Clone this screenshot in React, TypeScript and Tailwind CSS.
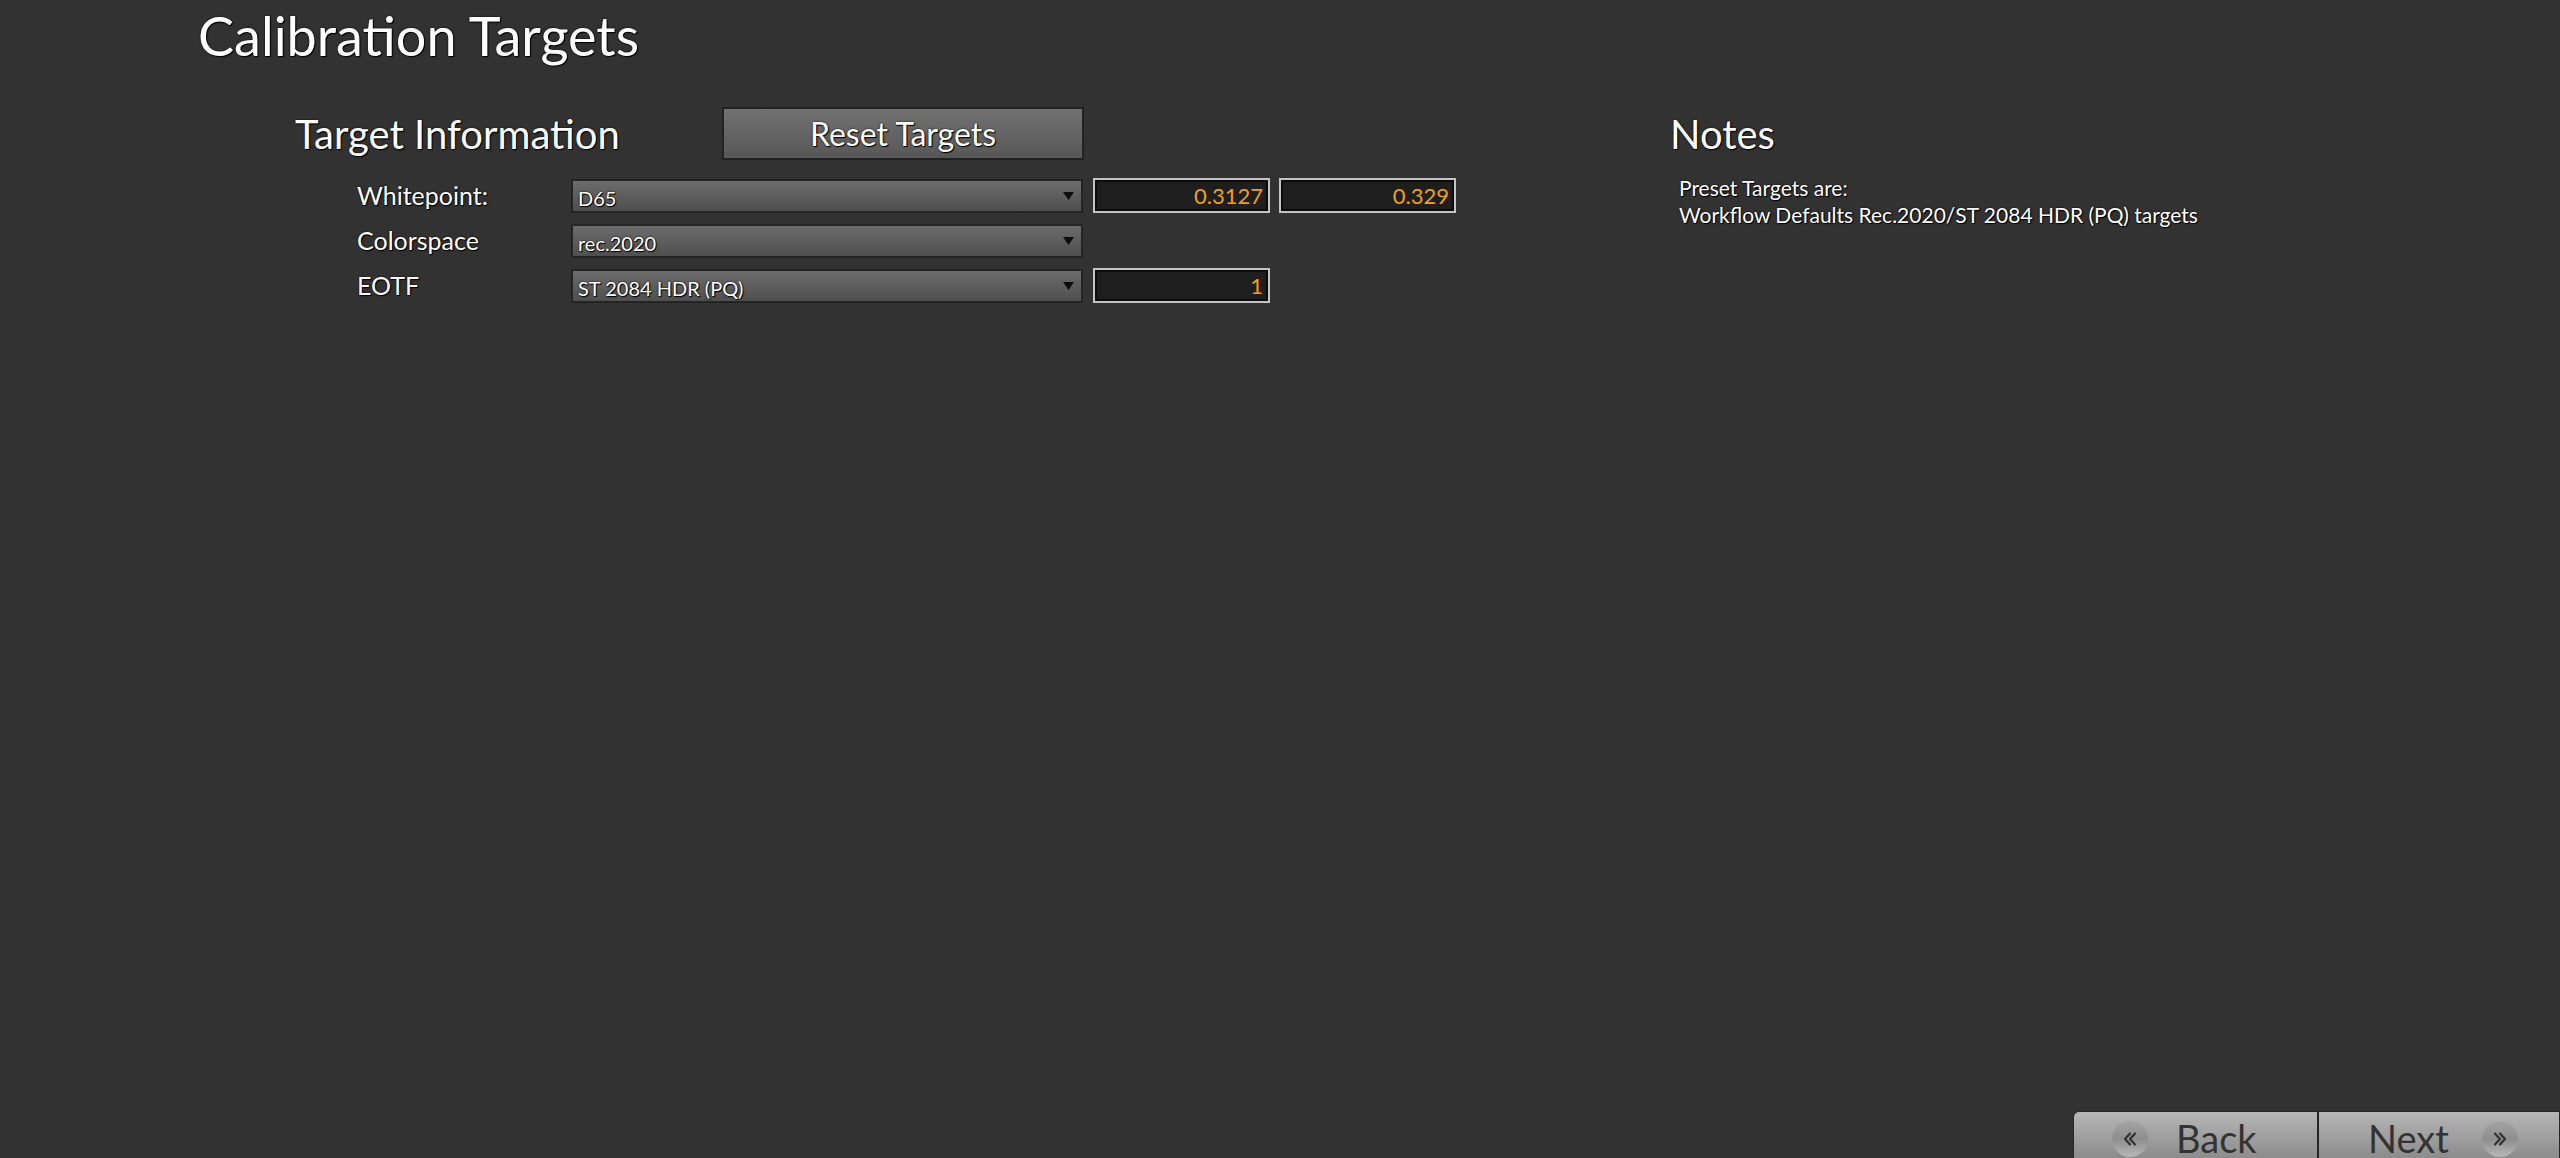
import { ReactNode } from "react";

const shadow = "[text-shadow:0_0_2px_#000,1px_1px_1px_#000]";

function Dropdown({ value }: { value: string }) {
  return (
    <div className="flex h-[34px] w-[512px] items-center justify-between border-2 border-[#242424] bg-gradient-to-b from-[#6c6c6c] to-[#4f4f4f] pl-[5px] pr-[7px]">
      <span className={`pt-1 text-[20px] leading-none text-white ${shadow}`}>{value}</span>
      <svg width="11" height="8" viewBox="0 0 11 8">
        <path d="M0 0 H11 L5.5 8 Z" fill="#0d0d0d" />
      </svg>
    </div>
  );
}

function NumberBox({ value }: { value: string }) {
  return (
    <div className="flex h-[35px] w-[177px] items-center justify-end border-2 border-[#c4c4c4] bg-[#1e1e1e] pr-[5px] shadow-[inset_0_0_0_2px_#0c0c0c]">
      <span className="text-[22px] leading-none text-[#f29e1d]">{value}</span>
    </div>
  );
}

function FormRow({ label, children }: { label: string; children: ReactNode }) {
  return (
    <div className="flex h-[35px] items-center">
      <span className={`w-[276px] pl-[62px] text-[25px] leading-none text-white ${shadow}`}>
        {label}
      </span>
      <div className="flex items-center gap-[9px]">{children}</div>
    </div>
  );
}

function NavButton({ label, dir }: { label: string; dir: "back" | "next" }) {
  const circle = (
    <span className="flex h-[36px] w-[36px] items-center justify-center rounded-full bg-gradient-to-b from-[#a4a4a4] via-[#8e8e8e] to-[#b8b8b8]">
      <svg width="16" height="16" viewBox="0 0 16 16" className={dir === "next" ? "rotate-180" : ""}>
        <path
          d="M8 2.5 L3 8 L8 13.5 M13 2.5 L8 8 L13 13.5"
          fill="none"
          stroke="#333"
          strokeWidth="2.2"
          strokeLinecap="round"
          strokeLinejoin="round"
        />
      </svg>
    </span>
  );
  return (
    <div
      className={`flex h-[47px] items-start border border-b-0 border-[#262626] bg-gradient-to-b from-[#b6b6b6] to-[#8c8c8c] pt-[9px] ${
        dir === "back" ? "w-[245px] rounded-tl-[6px] pl-[38px]" : "w-[242px] pl-[49px]"
      }`}
    >
      {dir === "back" && <div className="mr-[28px]">{circle}</div>}
      <span className="pt-[2px] text-[38px] leading-[30px] text-[#333333]">{label}</span>
      {dir === "next" && <div className="ml-[33px]">{circle}</div>}
    </div>
  );
}

export default function App() {
  return (
    <div className="flex h-[1158px] w-full flex-col overflow-hidden bg-[#323232] font-['Lato',sans-serif]">
      <h1 className={`pl-[198px] pt-[4px] text-[54px] font-normal leading-[64px] text-white ${shadow}`}>
        Calibration Targets
      </h1>

      <div className="mt-[39px] flex pl-[295px]">
        <div className="w-[1375px]">
          <div className="flex h-[53px] items-center">
            <h2 className={`w-[427px] text-[40px] font-normal text-white ${shadow}`}>Target Information</h2>
            <button className="flex h-[53px] w-[362px] items-center justify-center border-2 border-[#222] bg-gradient-to-b from-[#727272] to-[#575757]">
              <span className={`text-[32px] leading-none text-white ${shadow}`}>Reset Targets</span>
            </button>
          </div>

          <div className="mt-[18px] flex flex-col gap-[10px]">
            <FormRow label="Whitepoint:">
              <Dropdown value="D65" />
              <div className="ml-[1px] flex gap-[9px]">
                <NumberBox value="0.3127" />
                <NumberBox value="0.329" />
              </div>
            </FormRow>
            <FormRow label="Colorspace">
              <Dropdown value="rec.2020" />
            </FormRow>
            <FormRow label="EOTF">
              <Dropdown value="ST 2084 HDR (PQ)" />
              <div className="ml-[1px]">
                <NumberBox value="1" />
              </div>
            </FormRow>
          </div>
        </div>

        <div className="flex-1">
          <div className="flex h-[53px] items-center">
            <h2 className={`text-[40px] font-normal text-white ${shadow}`}>Notes</h2>
          </div>
          <div className={`mt-[14px] pl-[9px] text-[21px] leading-[27px] text-white ${shadow}`}>
            <p>Preset Targets are:</p>
            <p>Workflow Defaults Rec.2020/ST 2084 HDR (PQ) targets</p>
          </div>
        </div>
      </div>

      <div className="mt-auto flex justify-end">
        <NavButton label="Back" dir="back" />
        <NavButton label="Next" dir="next" />
      </div>
    </div>
  );
}
